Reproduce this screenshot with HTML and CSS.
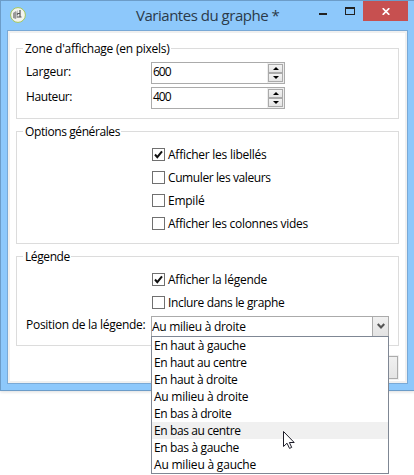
FILE: index.html
```
<!DOCTYPE html>
<html lang="fr">
<head>
<meta charset="utf-8">
<title>Variantes du graphe</title>
<link rel="stylesheet" href="styles.css">
</head>
<body>
<div class="window">
  <header class="titlebar">
    <svg class="app-icon" width="16" height="16" viewBox="0 0 16 16"><circle cx="8" cy="8" r="7.400" fill="#f3f4ee" stroke="#a3c65a"/><path d="M3 6l3-2v8l-3-1z" fill="#999"/><path d="M6 5l2-2v6l-2 3z" fill="#c2c2c2"/><path d="M10 3v7.500M7 7.500l1-1h2M7 10h4.500" fill="none" stroke="#555" stroke-width="1.200"/></svg>
    <h1 class="title"><span>Variantes du graphe *</span></h1>
    <svg class="minmax" width="44" height="20" viewBox="0 0 44 20"><path d="M0 12h8v2H0z" fill="#222"/><path d="M26 6h10v8H26zM27 8v5h8V8z" fill="#222" fill-rule="evenodd"/></svg>
    <div class="close"><svg width="8" height="7" viewBox="0 0 8 7"><path d="M.7.2l6.600 6.600M7.300.2L.7 6.800" stroke="#fff" stroke-width="1.700"/></svg></div>
  </header>
  <main class="content">
    <section class="group size">
      <h2 class="legend"><span class="t-zone">Zone d'affichage (en pixels)</span></h2>
      <div class="row"><label class="t-largeur">Largeur:</label><div class="spin"><span class="num">600</span><div class="steps"><i class="up"></i><i class="down"></i></div></div></div>
      <div class="row"><label class="t-hauteur">Hauteur:</label><div class="spin"><span class="num">400</span><div class="steps"><i class="up"></i><i class="down"></i></div></div></div>
    </section>
    <section class="group options">
      <h2 class="legend"><span class="t-options">Options générales</span></h2>
      <div class="check"><i class="box"><svg width="11" height="11" viewBox="0 0 11 11"><path d="M2 5.500l2.300 2.700L9 2.300" fill="none" stroke="#111" stroke-width="2"/></svg></i><span class="t-libelles">Afficher les libellés</span></div>
      <div class="check"><i class="box"></i><span class="t-cumuler">Cumuler les valeurs</span></div>
      <div class="check"><i class="box"></i><span class="t-empile">Empilé</span></div>
      <div class="check"><i class="box"></i><span class="t-colonnes">Afficher les colonnes vides</span></div>
    </section>
    <section class="group caption">
      <h2 class="legend"><span class="t-legende">Légende</span></h2>
      <div class="check"><i class="box"><svg width="11" height="11" viewBox="0 0 11 11"><path d="M2 5.500l2.300 2.700L9 2.300" fill="none" stroke="#111" stroke-width="2"/></svg></i><span class="t-affleg">Afficher la légende</span></div>
      <div class="check"><i class="box"></i><span class="t-inclure">Inclure dans le graphe</span></div>
      <div class="row select-row"><label class="t-position">Position de la légende:</label>
        <div class="select"><span class="t-value">Au milieu à droite</span><i class="arrow"><svg width="8" height="7" viewBox="0 0 8 7"><path d="M.7 1L4 4.500 7.300 1" fill="none" stroke="#555" stroke-width="2.200"/></svg></i>
          <ul class="menu">
            <li><span class="m1">En haut à gauche</span></li>
            <li><span class="m2">En haut au centre</span></li>
            <li><span class="m3">En haut à droite</span></li>
            <li><span class="m4">Au milieu à droite</span></li>
            <li><span class="m5">En bas à droite</span></li>
            <li class="hover"><span class="m6">En bas au centre</span></li>
            <li><span class="m7">En bas à gauche</span></li>
            <li><span class="m8">Au milieu à gauche</span></li>
          </ul>
        </div>
      </div>
    </section>
    <div class="footer"><button class="btn"></button></div>
  </main>
</div>
<svg class="cursor" width="13" height="20" viewBox="0 0 13 20"><path d="M.5 1.500v15l3.500-3.300 2.500 5.200 2.200-1-2.300-4.900h4.800z" fill="#fff" stroke="#1c1c28"/></svg>
</body>
</html>
```
FILE: styles.css
```
* { box-sizing: border-box; }
body { margin: 0; width: 414px; height: 475px; overflow: hidden; background: #fff; color: #000; font: 12px/17px "Open Sans", "Noto Sans", sans-serif; }
span, label { white-space: nowrap; }
.window { width: 415px; height: 391px; padding: 0 7px 6px 6px; background: #8dc8fb; border: 1px solid #6c9cc8; box-shadow: 0 1px 3px #ddd; }
.titlebar { display: flex; height: 29px; align-items: flex-start; }
.app-icon { flex: none; margin: 6px 0 0 3px; }
.title { flex: none; width: 293px; margin: 0; padding: 3px 0 0 110px; font-size: 15px; line-height: 22px; font-weight: 400; color: #2b3a4a; letter-spacing: -.48px; }
.minmax { flex: none; }
.close { flex: none; display: flex; align-items: center; justify-content: center; width: 45px; height: 20px; padding-top: 1px; background: #c75050; }
.content { width: 401px; height: 354px; padding: 16px 6px 0 7px; background: #fff; border: 1px solid #79a9d6; box-shadow: inset 0 0 0 2px #f0f0f0; }
.group { width: 383px; margin-left: 1px; border: 1px solid #dcdcdc; }
.size { height: 71px; margin-top: 1px; }
.options { height: 113px; margin-top: 12px; }
.caption { height: 90px; margin-top: 12px; }
.legend { display: flex; height: 13px; margin: 0; font: inherit; }
.legend span { height: 17px; margin: -9px 0 0 6px; padding: 0 1px 0 2px; background: #fff; }
.row { display: flex; height: 25px; }
.row label { width: 125px; flex: none; margin-left: 9px; padding-top: 1px; }
.spin { display: flex; justify-content: space-between; width: 134px; height: 22px; border: 1px solid #ababab; background: #fff; }
.num { padding: 0 0 0 1px; letter-spacing: -1px; }
.steps { display: flex; flex-direction: column; width: 17px; padding: 1px; background: #eee; }
.steps i { display: flex; align-items: center; justify-content: center; height: 9px; border: 1px solid #aaa; background: linear-gradient(#f3f3f3, #e4e4e4); }
.steps i::before { content: ""; border: solid transparent; border-width: 0 3px; }
.steps .up::before { border-bottom: 3px solid #000; }
.steps .down::before { border-top: 3px solid #000; }
.check { display: flex; align-items: center; height: 23px; padding-left: 135px; }
.box { display: flex; width: 13px; height: 13px; margin-right: 3px; border: 1px solid #707070; background: #fff; }
.options .legend { height: 11px; }
.caption .legend { height: 11px; }
.select-row { padding-top: 2px; height: 23px; }
.select-row label { padding-top: 0; }
.select { position: relative; display: flex; justify-content: space-between; width: 238px; height: 21px; border: 1px solid #ababab; background: #fff; }
.select > span { padding: 1px 0 0 0; }
.arrow { display: flex; align-items: center; justify-content: center; width: 16px; border-left: 1px solid #ababab; background: linear-gradient(#f1f1f1, #e3e3e3); }
.menu { position: absolute; left: -1px; top: 19px; width: 238px; height: 138px; margin: 0; padding: 0; border: 1px solid #7f8794; background: #fff; list-style: none; }
.menu li { height: 17px; padding-left: 2px; line-height: 17px; }
.menu .hover { background: #f0f0f0; }
.footer { display: flex; justify-content: flex-end; padding: 10px 3px 0 0; }
.btn { width: 75px; height: 23px; border: 1px solid #acacac; background: linear-gradient(#f0f0f0, #e5e5e5); box-shadow: 0 0 0 1px #f0f0f0; }
.cursor { position: absolute; left: 283px; top: 430px; }

/* Tracking for each label */
.t-largeur { letter-spacing: -.2px; }
.t-zone, .t-libelles, .t-empile, .t-affleg, .m4 { letter-spacing: -.25px; }
.m8 { letter-spacing: -.2px; }
.t-colonnes, .t-position, .t-value, .m1 { letter-spacing: -.28px; }
.t-inclure, .m2, .m3, .m7 { letter-spacing: -.36px; }
.t-options, .t-cumuler, .t-legende, .t-hauteur, .m5, .m6 { letter-spacing: -.4px; }
```
